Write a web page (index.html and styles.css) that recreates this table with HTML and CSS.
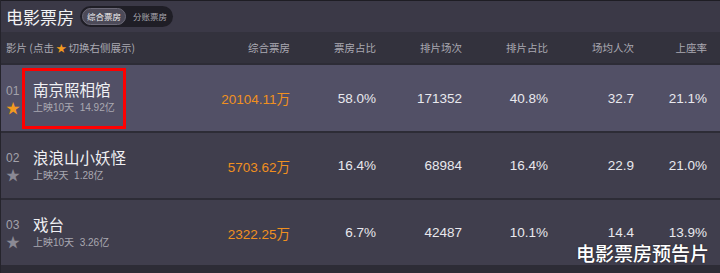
FILE: index.html
```html
<!DOCTYPE html>
<html lang="zh">
<head>
<meta charset="utf-8">
<link rel="stylesheet" href="styles.css">
</head>
<body>
<div class="board">
  <div class="topbar">
    <h1 class="title">电影票房</h1>
    <div class="toggle">
      <span class="tab active">综合票房</span>
      <span class="tab">分账票房</span>
    </div>
  </div>
  <div class="grid head">
    <div class="hname">影片 (点击 <span class="hstar">★</span> 切换右侧展示)</div>
    <div class="num">综合票房</div>
    <div class="num">票房占比</div>
    <div class="num">排片场次</div>
    <div class="num">排片占比</div>
    <div class="num">场均人次</div>
    <div class="num">上座率</div>
  </div>
  <div class="grid row hot">
    <div class="film">
      <div class="rank"><span class="no">01</span><span class="star on">★</span></div>
      <div class="info"><div class="name">南京照相馆</div><div class="sub">上映10天&nbsp; 14.92亿</div></div>
      <div class="mark"></div>
    </div>
    <div class="num val box">20104.11万</div>
    <div class="num val">58.0%</div>
    <div class="num val">171352</div>
    <div class="num val">40.8%</div>
    <div class="num val">32.7</div>
    <div class="num val">21.1%</div>
  </div>
  <div class="grid row">
    <div class="film">
      <div class="rank"><span class="no">02</span><span class="star">★</span></div>
      <div class="info"><div class="name">浪浪山小妖怪</div><div class="sub">上映2天&nbsp; 1.28亿</div></div>
    </div>
    <div class="num val box">5703.62万</div>
    <div class="num val">16.4%</div>
    <div class="num val">68984</div>
    <div class="num val">16.4%</div>
    <div class="num val">22.9</div>
    <div class="num val">21.0%</div>
  </div>
  <div class="grid row">
    <div class="film">
      <div class="rank"><span class="no">03</span><span class="star">★</span></div>
      <div class="info"><div class="name">戏台</div><div class="sub">上映10天&nbsp; 3.26亿</div></div>
    </div>
    <div class="num val box">2322.25万</div>
    <div class="num val">6.7%</div>
    <div class="num val">42487</div>
    <div class="num val">10.1%</div>
    <div class="num val">14.4</div>
    <div class="num val">13.9%</div>
  </div>
  <div class="watermark">电影票房预告片</div>
</div>
</body>
</html>
```

FILE: styles.css
```css
* { box-sizing: border-box; margin: 0; padding: 0; }
html, body { width: 720px; height: 273px; overflow: hidden; background: #2d2c36; }
body { font-family: "Liberation Sans", "Noto Sans CJK SC", sans-serif; color: #e6e6ea; }

.board {
  position: relative;
  width: 720px;
  height: 273px;
  display: flex;
  flex-direction: column;
  gap: 2px;
  border-left: 1px solid #25242c;
  background: #2d2c36;
}

.topbar {
  height: 32px;
  margin-bottom: -2px;
  background: #3b3947;
  border-top: 1px solid #1e1d24;
  display: flex;
  align-items: center;
  padding-left: 5px;
  gap: 6px;
}
.title {
  font-family: "Noto Sans CJK SC", sans-serif;
  font-size: 17px;
  font-weight: 400;
  color: #f2f2f4;
  line-height: 1;
}
.toggle {
  display: flex;
  align-items: center;
  height: 21px;
  background: #1f1e26;
  border-radius: 11px;
  padding: 0 2px;
  gap: 2px;
  width: 93px;
}
.tab {
  font-family: "Noto Sans CJK SC", sans-serif;
  font-size: 8.5px;
  color: #a9a8b0;
  padding: 0 4px;
  height: 17px;
  line-height: 15px;
  border-radius: 9px;
  border: 1px solid transparent;
  white-space: nowrap;
}
.tab.active {
  background: #4c4a58;
  border-color: #6b6977;
  color: #f0f0f2;
}

.grid {
  display: grid;
  grid-template-columns: 198px repeat(5, 86px) 73px;
  padding: 0 12px 0 5px;
  align-items: center;
}
.head {
  height: 31px;
  background: #33323d;
  font-family: "Noto Sans CJK SC", sans-serif;
  font-size: 10.5px;
  color: #aaa9b2;
}
.hname { font-size: 10.5px; }
.hstar { color: #f29a1f; font-size: 10px; }
.num { text-align: right; }

.row {
  height: 65px;
  background: #403e4d;
}
.row.hot { background: #525066; height: 66px; }

.film {
  position: relative;
  display: flex;
  align-items: center;
}
.rank {
  width: 27px;
  display: flex;
  flex-direction: column;
  align-items: flex-start;
  gap: 3px;
  margin-top: 2px;
}
.no { font-size: 12px; color: #a3a2ab; line-height: 14px; }
.star { font-size: 14px; line-height: 14px; color: #8a8994; }
.star.on { color: #f29a1f; }
.info { display: flex; flex-direction: column; gap: 4px; margin-top: -1px; }
.name {
  font-family: "Noto Sans CJK SC", sans-serif;
  font-size: 15.5px;
  line-height: 17px;
  color: #f0f0f3;
}
.sub {
  font-family: "Liberation Sans", "Noto Sans CJK SC", sans-serif;
  font-size: 10px;
  line-height: 12px;
  color: #a9a8b1;
}
.mark {
  position: absolute;
  left: 16px;
  top: 3px;
  width: 104px;
  height: 61px;
  border: 3px solid #ff0000;
}
.hot .film { height: 66px; }

.val { font-size: 13.5px; color: #e9e9ee; }
.val.box { color: #f0901f; }

.watermark {
  position: absolute;
  right: 11px;
  bottom: 9px;
  font-family: "Noto Sans CJK SC", sans-serif;
  font-size: 19px;
  font-weight: 500;
  color: #ffffff;
  line-height: 22px;
  text-shadow: 0 0 2px rgba(0,0,0,0.5);
}
```
